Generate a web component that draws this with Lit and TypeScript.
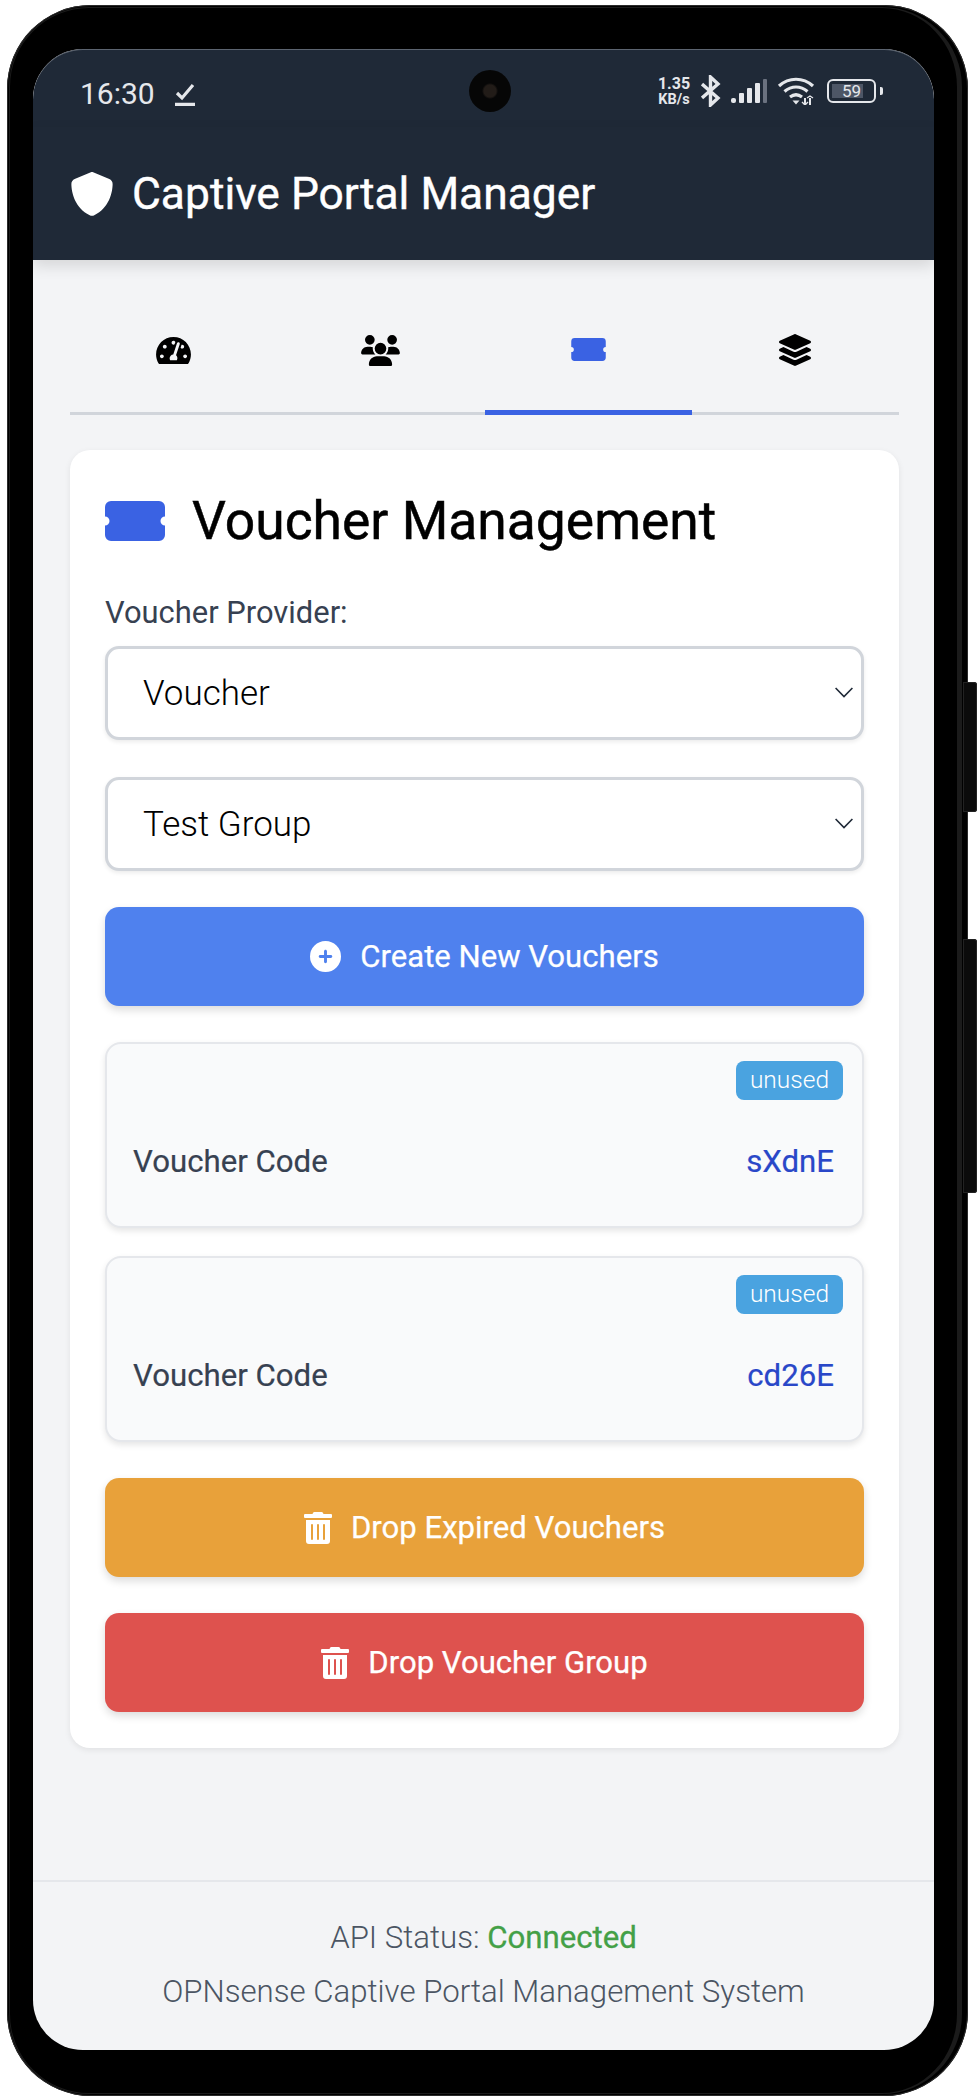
import { LitElement, html, css, svg } from 'lit';
import { customElement } from 'lit/decorators.js';

const ticketPath = 'M6 0h48a6 6 0 0 1 6 6v9.5a4.5 4.5 0 0 0 0 9V34a6 6 0 0 1-6 6H6a6 6 0 0 1-6-6V24.5a4.5 4.5 0 0 0 0-9V6a6 6 0 0 1 6-6z';
const trashPath = 'M32 464a48 48 0 0 0 48 48h288a48 48 0 0 0 48-48V128H32zm272-256a16 16 0 0 1 32 0v224a16 16 0 0 1-32 0zm-96 0a16 16 0 0 1 32 0v224a16 16 0 0 1-32 0zm-96 0a16 16 0 0 1 32 0v224a16 16 0 0 1-32 0zM432 32H312l-9.4-18.7A24 24 0 0 0 281.1 0H166.8a23.72 23.72 0 0 0-21.4 13.3L136 32H16A16 16 0 0 0 0 48v32a16 16 0 0 0 16 16h416a16 16 0 0 0 16-16V48a16 16 0 0 0-16-16z';

const tabs = [
    {
        box: '0 0 576 512', w: 35, h: 31,
        d: 'M288 32C128.94 32 0 160.94 0 320c0 52.8 14.25 102.26 39.06 144.8 5.61 9.62 16.3 15.2 27.44 15.2h443c11.14 0 21.83-5.58 27.44-15.2C561.75 422.26 576 372.8 576 320c0-159.06-128.94-288-288-288zm0 64c14.71 0 26.58 10.13 30.32 23.65-1.11 2.26-2.64 4.23-3.45 6.67l-9.22 27.67c-5.13 3.49-10.97 6.01-17.64 6.01-17.67 0-32-14.33-32-32S270.33 96 288 96zM96 384c-17.67 0-32-14.33-32-32s14.33-32 32-32 32 14.33 32 32-14.33 32-32 32zm48-160c-17.67 0-32-14.33-32-32s14.33-32 32-32 32 14.33 32 32-14.33 32-32 32zm246.77-72.41l-61.33 184C343.13 347.33 352 364.54 352 384c0 11.72-3.38 22.55-8.88 32H232.88c-5.5-9.45-8.88-20.28-8.88-32 0-33.94 26.5-61.43 59.9-63.59l61.34-184.01c4.17-12.56 17.73-19.45 30.36-15.17 12.57 4.19 19.35 17.79 15.17 30.36zm14.66 57.2l15.52-46.55c3.47-1.29 7.13-2.23 11.05-2.23 17.67 0 32 14.33 32 32s-14.33 32-32 32c-11.38-.01-20.89-6.28-26.57-15.22zM480 384c-17.67 0-32-14.33-32-32s14.33-32 32-32 32 14.33 32 32-14.33 32-32 32z'
    },
    {
        box: '0 0 640 512', w: 39, h: 31,
        d: 'M144 0a80 80 0 1 1 0 160A80 80 0 1 1 144 0zM512 0a80 80 0 1 1 0 160A80 80 0 1 1 512 0zM0 298.7C0 239.8 47.8 192 106.7 192h42.7c15.9 0 31 3.5 44.6 9.7c-1.3 7.2-1.9 14.7-1.9 22.3c0 38.2 16.8 72.5 43.3 96c-.2 0-.4 0-.7 0H21.3C9.6 320 0 310.4 0 298.7zM405.3 320c-.2 0-.4 0-.7 0c26.6-23.5 43.3-57.8 43.3-96c0-7.6-.7-15-1.9-22.3c13.6-6.3 28.7-9.7 44.6-9.7h42.7C592.2 192 640 239.8 640 298.7c0 11.8-9.6 21.3-21.3 21.3H405.3zM224 224a96 96 0 1 1 192 0 96 96 0 1 1 -192 0zM128 485.3C128 411.7 187.7 352 261.3 352H378.7C452.3 352 512 411.7 512 485.3c0 14.7-11.9 26.7-26.7 26.7H154.7c-14.7 0-26.7-11.9-26.7-26.7z'
    },
    { box: '0 0 60 40', w: 35, h: 23, d: ticketPath, active: true },
    {
        box: '0 0 512 512', w: 32, h: 32,
        d: 'M12.41 148.02l232.94 105.67c6.8 3.09 14.49 3.09 21.29 0l232.94-105.67c16.55-7.51 16.55-32.52 0-40.03L266.65 2.31a25.607 25.607 0 0 0-21.29 0L12.41 107.98c-16.55 7.51-16.55 32.53 0 40.04zm487.18 88.28l-58.09-26.33-161.64 73.27c-7.56 3.43-15.59 5.17-23.86 5.17s-16.29-1.74-23.86-5.17L70.51 209.97l-58.1 26.33c-16.55 7.5-16.55 32.5 0 40l232.94 105.59c6.8 3.08 14.49 3.08 21.29 0L499.59 276.3c16.55-7.5 16.55-32.5 0-40zm0 127.8l-57.87-26.23-161.86 73.37c-7.56 3.43-15.59 5.17-23.86 5.17s-16.29-1.74-23.86-5.17L70.29 337.87 12.41 364.1c-16.55 7.5-16.55 32.5 0 40l232.94 105.59c6.8 3.08 14.49 3.08 21.29 0L499.59 404.1c16.55-7.5 16.55-32.5 0-40z'
    }
];

const vouchers = ['sXdnE', 'cd26E'];

@customElement('app-root')
export class AppRoot extends LitElement {
    static styles = css`
        :host {
            display: block;
            width: 978px;
            height: 2100px;
            background: #ffffff;
            font-family: Roboto, 'Liberation Sans', sans-serif;
            overflow: hidden;
        }
        .phone {
            position: relative;
            box-sizing: border-box;
            width: 961px;
            height: 2091px;
            margin: 5px 0 0 7px;
            padding: 44px 34px 46px 26px;
            background: #000000;
            border-radius: 84px;
            box-shadow: inset 0 0 0 1px #2a2a2a;
        }
        .phone::before {
            content: '';
            position: absolute;
            inset: 2px 6px 2px 2px;
            border: 1px solid #1b1b1b;
            border-right-width: 5px;
            border-radius: 80px;
        }
        .side-key {
            position: absolute;
            left: 956px;
            width: 14px;
            background: #0b0b0b;
            border-radius: 0 3px 3px 0;
            box-shadow: inset 0 0 0 1px #222222;
        }
        .key-power { top: 677px; height: 130px; }
        .key-volume { top: 934px; height: 254px; }
        .screen {
            position: relative;
            display: flex;
            flex-direction: column;
            height: 100%;
            background: #f3f4f6;
            border-radius: 50px;
            overflow: hidden;
        }
        .status {
            position: relative;
            flex: none;
            display: flex;
            align-items: center;
            justify-content: space-between;
            box-sizing: border-box;
            height: 78px;
            padding: 6px 51px 0 47px;
            background: #1f2937;
            border-radius: 50px 50px 0 0;
            box-shadow: inset 0 1px 0 #5c6470;
            color: #e5e7eb;
        }
        .time-wrap {
            display: flex;
            align-items: center;
            gap: 20px;
            margin-top: 6px;
        }
        .time {
            font-size: 30px;
            line-height: 36px;
        }
        .camera {
            position: absolute;
            left: 436px;
            top: 21px;
            width: 42px;
            height: 42px;
            border-radius: 50%;
            background: radial-gradient(circle at 50% 50%, #221c18 0 6px, #060606 8px 100%);
        }
        .status-icons {
            display: flex;
            align-items: center;
        }
        .speed {
            display: flex;
            flex-direction: column;
            align-items: center;
            width: 34px;
            margin-right: 10px;
            font-weight: 700;
        }
        .speed span:first-child {
            font-size: 16px;
            line-height: 16px;
        }
        .speed span:last-child {
            font-size: 14.5px;
            line-height: 15px;
        }
        .battery {
            position: relative;
            box-sizing: border-box;
            width: 49px;
            height: 24px;
            margin-left: 12px;
            border: 2px solid #e5e7eb;
            border-radius: 6px;
        }
        .battery-fill {
            position: absolute;
            left: 3px;
            top: 3px;
            bottom: 3px;
            background: #4d5666;
        }
        .battery-text {
            position: relative;
            display: block;
            text-align: center;
            font-size: 17px;
            line-height: 20px;
        }
        .battery-nub {
            width: 3px;
            height: 8px;
            margin-left: 4px;
            background: #e5e7eb;
            border-radius: 0 2px 2px 0;
        }
        .header {
            flex: none;
            display: flex;
            align-items: center;
            gap: 19px;
            box-sizing: border-box;
            height: 133px;
            padding: 0 0 0 38px;
            background: #1f2937;
            box-shadow: 0 6px 14px rgba(0, 0, 0, 0.12);
            position: relative;
            color: #ffffff;
        }
        .header h1 {
            margin: 0;
            font-size: 44.35px;
            line-height: 52px;
            font-weight: 400;
            -webkit-text-stroke: 0.4px currentColor;
        }
        .main {
            flex: 1;
            padding: 36px 35px 0 37px;
        }
        .tabs {
            display: flex;
            height: 119px;
            box-sizing: border-box;
            border-bottom: 3px solid #d1d5db;
        }
        .tab {
            flex: 1;
            display: flex;
            align-items: center;
            justify-content: center;
            box-sizing: border-box;
            height: 119px;
            padding-bottom: 8px;
            color: #000000;
            border-bottom: 3px solid transparent;
        }
        .tab.active {
            color: #3a62e3;
            border-bottom: 5px solid #3a62e3;
        }
        .card {
            display: flex;
            flex-direction: column;
            margin-top: 35px;
            padding: 40px 35px 36px;
            background: #ffffff;
            border-radius: 20px;
            box-shadow: 0 2px 6px rgba(0, 0, 0, 0.08);
        }
        .title {
            display: flex;
            align-items: center;
            gap: 27px;
            margin: 0 0 43px;
            font-size: 53.4px;
            line-height: 62px;
            font-weight: 400;
            color: #000000;
            -webkit-text-stroke: 0.5px #000000;
        }
        .title svg {
            color: #3a62e3;
        }
        .label {
            font-size: 30.9px;
            line-height: 36px;
            font-weight: 400;
            color: #374151;
            margin-bottom: 15px;
        }
        .select-wrap {
            position: relative;
            margin-bottom: 37px;
        }
        .select-wrap + .select-wrap {
            margin-bottom: 36px;
        }
        select {
            display: block;
            box-sizing: border-box;
            width: 100%;
            height: 94px;
            padding: 0 35px;
            appearance: none;
            background: #ffffff;
            border: 3px solid #d1d5db;
            border-radius: 14px;
            box-shadow: 0 2px 4px rgba(0, 0, 0, 0.08);
            font-family: inherit;
            font-size: 35px;
            font-weight: 300;
            color: #000000;
        }
        .chevron {
            position: absolute;
            right: 11px;
            top: 41px;
        }
        .btn {
            display: flex;
            align-items: center;
            justify-content: center;
            gap: 19px;
            box-sizing: border-box;
            width: 100%;
            height: 99px;
            border: 0;
            border-radius: 14px;
            box-shadow: 0 4px 8px rgba(0, 0, 0, 0.14);
            color: #ffffff;
            font-family: inherit;
            font-size: 31.1px;
            font-weight: 400;
            -webkit-text-stroke: 0.25px currentColor;
        }
        .btn-blue { background: #4f81ee; margin-bottom: 36px; }
        .btn-orange { background: #e8a13a; margin: 8px 0 36px; }
        .btn-red { background: #de524e; }
        .voucher {
            display: flex;
            flex-direction: column;
            box-sizing: border-box;
            height: 186px;
            margin-bottom: 28px;
            padding: 17px 19px 0 17px;
            background: #f9fafb;
            border: 2px solid #e5e7eb;
            border-radius: 16px;
            box-shadow: 0 3px 6px rgba(0, 0, 0, 0.1);
        }
        .badge {
            align-self: flex-end;
            box-sizing: border-box;
            height: 39px;
            padding: 0 14px;
            background: #4aa3e0;
            border-radius: 8px;
            color: #ffffff;
            font-size: 24.5px;
            font-weight: 300;
            line-height: 38px;
        }
        .voucher-row {
            display: flex;
            justify-content: space-between;
            margin-top: 44px;
            padding: 0 9px;
            font-size: 31.2px;
            line-height: 36px;
            font-weight: 400;
            color: #374151;
            -webkit-text-stroke: 0.2px currentColor;
        }
        .code {
            color: #2947c8;
        }
        .footer {
            flex: none;
            box-sizing: border-box;
            height: 170px;
            padding-top: 29px;
            border-top: 2px solid #e5e7eb;
            text-align: center;
            font-size: 31.2px;
            line-height: 54px;
            font-weight: 300;
            color: #4b5563;
        }
        .connected {
            color: #43a047;
            font-weight: 400;
            -webkit-text-stroke: 0.3px currentColor;
        }
    `;

    private ticket(w: number, h: number) {
        return html`<svg width=${w} height=${h} viewBox="0 0 60 40" fill="currentColor"><path d=${ticketPath}></path></svg>`;
    }

    private trash() {
        return html`<svg width="28" height="32" viewBox="0 0 448 512" fill="currentColor"><path d=${trashPath}></path></svg>`;
    }

    private chevron() {
        return html`<svg class="chevron" width="18" height="11" viewBox="0 0 18 11" fill="none" stroke="#1f2937" stroke-width="1.6"><path d="M.6 1L9 9.6 17.4 1"></path></svg>`;
    }

    private statusIcons() {
        return html`
            <div class="status-icons">
                <div class="speed"><span>1.35</span><span>KB/s</span></div>
                <svg width="20" height="32" viewBox="0 0 20 32" fill="none" stroke="#e5e7eb" stroke-width="3.4">
                    <path d="M1 9l16 14-7.5 7V2L17 9 1 23"></path>
                </svg>
                <svg style="margin-left:10px" width="36" height="24" viewBox="0 0 36 24" fill="#e5e7eb">
                    <rect x="0" y="19" width="5" height="5" rx="2"></rect>
                    <rect x="8" y="14" width="5" height="10" rx="1"></rect>
                    <rect x="16" y="9" width="5" height="15" rx="1"></rect>
                    <rect x="24" y="4" width="5" height="20" rx="1"></rect>
                    <rect x="32" y="0" width="4" height="24" rx="1" fill="#6b7280"></rect>
                </svg>
                <svg style="margin-left:10px" width="38" height="28" viewBox="0 0 38 28" fill="none" stroke="#e5e7eb" stroke-width="3.2">
                    ${svg`<path d="M2 9c10-9 24-9 34 0"></path>
                    <path d="M7.5 14.5c7-6 16-6 23 0"></path>
                    <path d="M13 20c4-3 8-3 12 0"></path>
                    <path d="M15.5 23.5h7L19 27.5z" fill="#e5e7eb" stroke="none"></path>
                    <path d="M28 21v7M33 21v7" stroke-width="2"></path>
                    <path d="M25 25l3 3 3-3M30 21l3-2 3 2" stroke-width="1.4"></path>`}
                </svg>
                <div class="battery">
                    <div class="battery-fill" style="width:${Math.round(59 * 0.53)}px"></div>
                    <span class="battery-text">59</span>
                </div>
                <div class="battery-nub"></div>
            </div>
        `;
    }

    render() {
        return html`
            <div class="phone">
                <div class="side-key key-power"></div>
                <div class="side-key key-volume"></div>
                <div class="screen">
                    <div class="status">
                        <div class="time-wrap">
                            <span class="time">16:30</span>
                            <svg width="20" height="24" viewBox="0 0 20 24" fill="none" stroke="#e5e7eb" stroke-width="3.2">
                                <path d="M2 11l5 5L18 3"></path>
                                <path d="M0 22.4h20"></path>
                            </svg>
                        </div>
                        <div class="camera"></div>
                        ${this.statusIcons()}
                    </div>
                    <div class="header">
                        <svg width="42" height="44" viewBox="16 0 480 512" fill="currentColor">
                            <path d="M256 0c4.6 0 9.2 1 13.4 2.9L457.7 82.8c22 9.3 38.4 31 38.3 57.2c-.5 99.2-41.3 280.7-213.6 363.2c-16.7 8-36.1 8-52.8 0C57.3 420.7 16.5 239.2 16 140c-.1-26.2 16.3-47.9 38.3-57.2L242.7 2.9C246.8 1 251.4 0 256 0z"></path>
                        </svg>
                        <h1>Captive Portal Manager</h1>
                    </div>
                    <div class="main">
                        <div class="tabs">
                            ${tabs.map(t => html`
                                <div class="tab ${t.active ? 'active' : ''}">
                                    <svg width=${t.w} height=${t.h} viewBox=${t.box} fill="currentColor"><path d=${t.d}></path></svg>
                                </div>
                            `)}
                        </div>
                        <div class="card">
                            <h2 class="title">${this.ticket(60, 40)}Voucher Management</h2>
                            <div class="label">Voucher Provider:</div>
                            <div class="select-wrap">
                                <select><option>Voucher</option></select>
                                ${this.chevron()}
                            </div>
                            <div class="select-wrap">
                                <select><option>Test Group</option></select>
                                ${this.chevron()}
                            </div>
                            <button class="btn btn-blue">
                                <svg width="31" height="31" viewBox="0 0 512 512" fill="currentColor"><path d="M256 512A256 256 0 1 0 256 0a256 256 0 1 0 0 512zM232 344V280H168c-13.3 0-24-10.7-24-24s10.7-24 24-24h64V168c0-13.3 10.7-24 24-24s24 10.7 24 24v64h64c13.3 0 24 10.7 24 24s-10.7 24-24 24H280v64c0 13.3-10.7 24-24 24s-24-10.7-24-24z"></path></svg>
                                Create New Vouchers
                            </button>
                            ${vouchers.map(code => html`
                                <div class="voucher">
                                    <span class="badge">unused</span>
                                    <div class="voucher-row">
                                        <span>Voucher Code</span>
                                        <span class="code">${code}</span>
                                    </div>
                                </div>
                            `)}
                            <button class="btn btn-orange">${this.trash()}Drop Expired Vouchers</button>
                            <button class="btn btn-red">${this.trash()}Drop Voucher Group</button>
                        </div>
                    </div>
                    <div class="footer">
                        <div>API Status: <span class="connected">Connected</span></div>
                        <div>OPNsense Captive Portal Management System</div>
                    </div>
                </div>
            </div>
        `;
    }
}
